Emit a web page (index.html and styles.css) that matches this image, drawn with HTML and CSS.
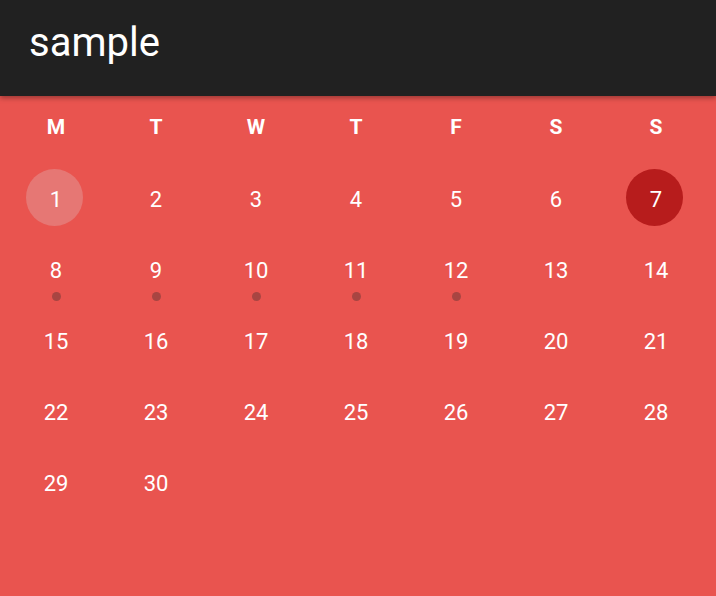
FILE: index.html
```html
<!DOCTYPE html>
<html>
<head>
<meta charset="utf-8">
<link rel="stylesheet" href="styles.css">
</head>
<body>
<header class="appbar"><h1 class="title">sample</h1></header>
<main class="calendar">
  <div class="weekdays">
    <div class="wd">M</div><div class="wd">T</div><div class="wd">W</div><div class="wd">T</div><div class="wd">F</div><div class="wd">S</div><div class="wd">S</div>
  </div>
  <div class="days">
    <div class="day"><span class="num today">1</span></div>
    <div class="day"><span class="num">2</span></div>
    <div class="day"><span class="num">3</span></div>
    <div class="day"><span class="num">4</span></div>
    <div class="day"><span class="num">5</span></div>
    <div class="day"><span class="num">6</span></div>
    <div class="day"><span class="num selected">7</span></div>
    <div class="day"><span class="num">8</span><span class="dot"></span></div>
    <div class="day"><span class="num">9</span><span class="dot"></span></div>
    <div class="day"><span class="num">10</span><span class="dot"></span></div>
    <div class="day"><span class="num">11</span><span class="dot"></span></div>
    <div class="day"><span class="num">12</span><span class="dot"></span></div>
    <div class="day"><span class="num">13</span></div>
    <div class="day"><span class="num">14</span></div>
    <div class="day"><span class="num">15</span></div>
    <div class="day"><span class="num">16</span></div>
    <div class="day"><span class="num">17</span></div>
    <div class="day"><span class="num">18</span></div>
    <div class="day"><span class="num">19</span></div>
    <div class="day"><span class="num">20</span></div>
    <div class="day"><span class="num">21</span></div>
    <div class="day"><span class="num">22</span></div>
    <div class="day"><span class="num">23</span></div>
    <div class="day"><span class="num">24</span></div>
    <div class="day"><span class="num">25</span></div>
    <div class="day"><span class="num">26</span></div>
    <div class="day"><span class="num">27</span></div>
    <div class="day"><span class="num">28</span></div>
    <div class="day"><span class="num">29</span></div>
    <div class="day"><span class="num">30</span></div>
  </div>
</main>
</body>
</html>
```
FILE: styles.css
```css
html, body {
  margin: 0;
  padding: 0;
  height: 100%;
  background: #E9544F;
  font-family: Roboto, "Liberation Sans", sans-serif;
  color: #ffffff;
  overflow: hidden;
}
.appbar {
  position: relative;
  z-index: 1;
  height: 96px;
  background: #212121;
  box-shadow: 0 2px 5px rgba(0, 0, 0, 0.35);
  display: flex;
  align-items: center;
  padding-left: 29px;
  box-sizing: border-box;
}
.title {
  margin: 0;
  font-size: 40px;
  font-weight: 400;
  line-height: 1;
  position: relative;
  top: -5px;
}
.calendar {
  padding: 0 10px 0 6px;
}
.weekdays {
  display: grid;
  grid-template-columns: repeat(7, 100px);
  height: 61px;
}
.wd {
  display: flex;
  align-items: center;
  justify-content: center;
  font-weight: 700;
  font-size: 21px;
}
.days {
  display: grid;
  grid-template-columns: repeat(7, 100px);
  grid-auto-rows: 71px;
  padding-top: 7px;
}
.day {
  position: relative;
  display: flex;
  align-items: center;
  justify-content: center;
}
.num {
  box-sizing: border-box;
  width: 57px;
  height: 57px;
  border-radius: 50%;
  display: flex;
  align-items: center;
  justify-content: center;
  font-size: 22px;
}
.today,
.selected {
  margin-top: -5px;
  padding-top: 5px;
  margin-left: -3px;
  padding-left: 3px;
}
.today {
  background: #E67774;
}
.selected {
  background: #B71C1C;
}
.dot {
  position: absolute;
  left: 50%;
  top: calc(50% + 21px);
  width: 9px;
  height: 9px;
  margin-left: -4.5px;
  border-radius: 50%;
  background: #A84542;
}
```
